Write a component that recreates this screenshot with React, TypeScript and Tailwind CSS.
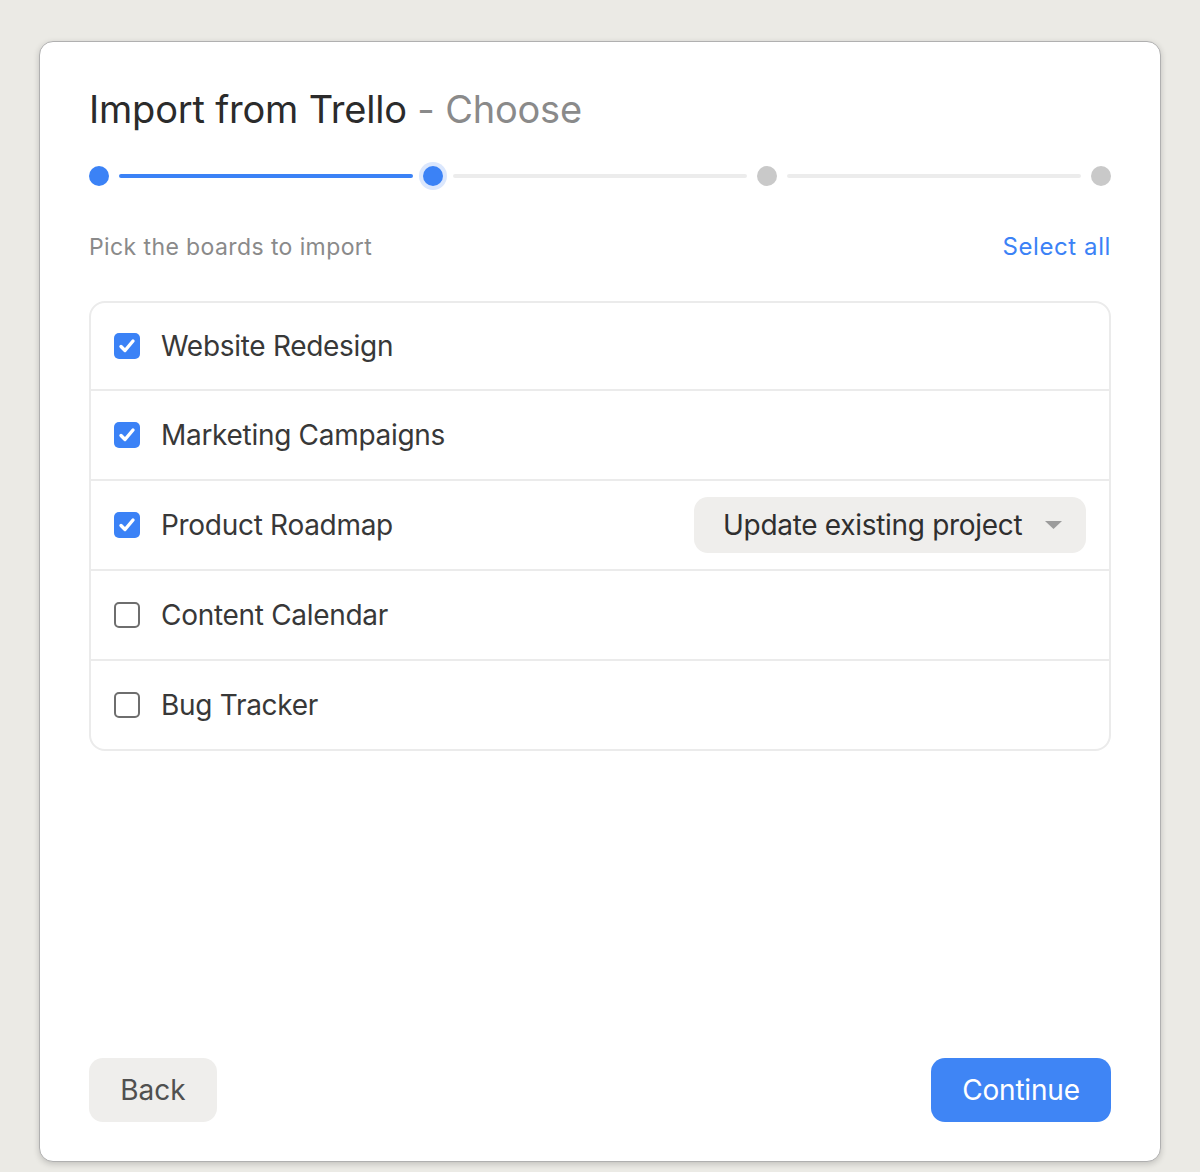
import { useState } from "react"

type Board = { id: string; name: string; checked: boolean; mode?: string }

const initialBoards: Board[] = [
    { id: "web", name: "Website Redesign", checked: true },
    { id: "mkt", name: "Marketing Campaigns", checked: true },
    { id: "road", name: "Product Roadmap", checked: true, mode: "Update existing project" },
    { id: "content", name: "Content Calendar", checked: false },
    { id: "bugs", name: "Bug Tracker", checked: false },
]

const Checkbox = ({ checked, onClick }: { checked: boolean; onClick: () => void }) => (
    <button
        onClick={onClick}
        className={`w-[26px] h-[26px] shrink-0 rounded-[5px] flex items-center justify-center ${checked ? "bg-[#3b82f6]" : "bg-white border-2 border-[#6e6e6e]"}`}
    >
        {checked && (
            <svg width="20" height="20" viewBox="0 0 20 20" fill="none">
                <path d="M4 10.5 L8 14.5 L16 5" stroke="white" strokeWidth="3.4" strokeLinecap="round" strokeLinejoin="round" />
            </svg>
        )}
    </button>
)

const Stepper = ({ step }: { step: number }) => {
    const dots = [0, 1, 2, 3]
    return (
        <div className="flex items-center h-7 mt-[30px]">
            {dots.map((i) => (
                <div key={i} className={`flex items-center ${i < 3 ? "flex-1" : ""}`}>
                    <div
                        className={`w-5 h-5 rounded-full shrink-0 ${i <= step ? "bg-[#3b82f6]" : "bg-[#c9c9c9]"} ${i === step ? "shadow-[0_0_0_4px_#dbe7fd]" : ""}`}
                    />
                    {i < 3 && (
                        <div className={`flex-1 h-1 mx-[10px] rounded-full ${i < step ? "bg-[#3b82f6]" : "bg-[#ececec]"}`} />
                    )}
                </div>
            ))}
        </div>
    )
}

const App = () => {
    const [boards, setBoards] = useState(initialBoards)

    const toggle = (id: string) =>
        setBoards((prev) => prev.map((b) => (b.id === id ? { ...b, checked: !b.checked } : b)))

    const selectAll = () => setBoards((prev) => prev.map((b) => ({ ...b, checked: true })))

    return (
        <div className="min-h-screen bg-[#ebeae5] px-[39px] pt-[41px] pb-[10px] font-['Inter','Noto_Sans',sans-serif]">
            <div className="h-[1121px] bg-white border border-[#b0b0b0] rounded-[14px] shadow-[0_2px_6px_rgba(0,0,0,0.18)] px-[49px] pt-[44px] pb-[39px] flex flex-col">
                <h1 className="text-[38px] leading-[46px] text-[#2b2b2b] tracking-[-0.2px]">
                    Import from Trello <span className="text-[#8a8a8a]">- Choose</span>
                </h1>

                {/* Stepper */}
                <Stepper step={1} />

                <div className="flex items-baseline justify-between mt-[42px]">
                    <p className="text-[23px] leading-[27px] text-[#8a8a8a] tracking-[0.4px]">Pick the boards to import</p>
                    <button onClick={selectAll} className="text-[24px] leading-[29px] text-[#3b82f6] tracking-[0.6px]">Select all</button>
                </div>

                <div className="mt-[40px] border-2 border-[#ebebeb] rounded-[16px] divide-y-2 divide-[#ebebeb]">
                    {boards.map((board, idx) => (
                        <div
                            key={board.id}
                            className={`${idx === 0 || idx === boards.length - 1 ? "h-[88px]" : "h-[90px]"} flex items-center px-[23px] gap-[21px]`}
                        >
                            <Checkbox checked={board.checked} onClick={() => toggle(board.id)} />
                            <span className="flex-1 text-[28px] text-[#383838] tracking-[-0.3px]">{board.name}</span>
                            {board.mode && (
                                <button className="h-[56px] w-[392px] bg-[#efeeec] rounded-[14px] pl-[29px] pr-[24px] flex items-center justify-between text-[28px] text-[#2f2f2f] tracking-[-0.3px]">
                                    {board.mode}
                                    <svg width="17" height="8" viewBox="0 0 17 8">
                                        <path d="M0 0 H17 L8.5 8 Z" fill="#9c9c9c" />
                                    </svg>
                                </button>
                            )}
                        </div>
                    ))}
                </div>

                <div className="mt-auto flex items-center justify-between">
                    <button className="h-16 w-[128px] rounded-[14px] bg-[#efeeec] text-[28px] text-[#505050]">Back</button>
                    <button className="h-16 w-[180px] rounded-[14px] bg-[#3f85f5] text-[28px] text-white tracking-[-0.2px]">Continue</button>
                </div>
            </div>
        </div>
    )
}

export default App
